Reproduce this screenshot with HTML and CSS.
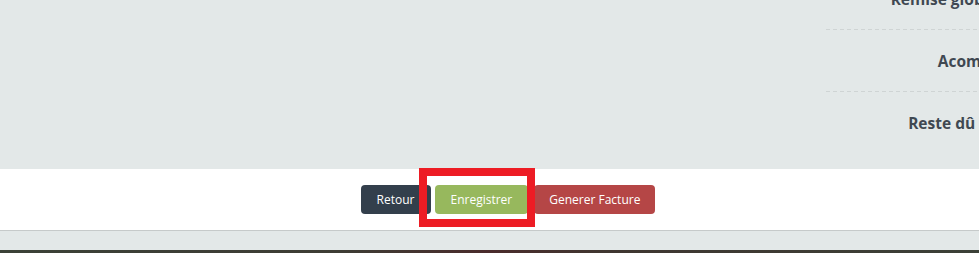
FILE: index.html
```html
<!DOCTYPE html>
<html lang="fr">
<head>
<meta charset="utf-8">
<title>Facture</title>
<link rel="stylesheet" href="styles.css">
</head>
<body>
  <section class="panel">
    <div class="summary">
      <div class="row"><span class="label">Remise globale</span></div>
      <div class="row"><span class="label">Acompte</span></div>
      <div class="row last"><span class="label">Reste dû TTC</span></div>
    </div>
  </section>
  <div class="actions">
    <button class="btn btn-dark" type="button">Retour</button>
    <span class="highlight"><button class="btn btn-green" type="button">Enregistrer</button></span>
    <button class="btn btn-red" type="button">Generer Facture</button>
  </div>
  <div class="strip"></div>
  <div class="dark-strip"></div>
</body>
</html>
```

FILE: styles.css
```css
html, body {
  margin: 0;
  padding: 0;
  overflow: hidden;
  background: #ffffff;
  font-family: "Open Sans", "Liberation Sans", sans-serif;
}

.panel {
  height: 169px;
  background: #e3e8e8;
  overflow: hidden;
}

.summary {
  margin-left: 826px;
  width: 181px;
  margin-top: -32px;
}

.row {
  height: 62px;
  display: flex;
  align-items: center;
  justify-content: flex-end;
  white-space: nowrap;
  background-image: repeating-linear-gradient(to right, #cfd4d4 0 4px, transparent 4px 7px);
  background-size: 100% 1px;
  background-position: left bottom;
  background-repeat: no-repeat;
}

.row.last {
  background-image: none;
}

.label {
  font-weight: 700;
  font-size: 15.5px;
  color: #3f4852;
}

.actions {
  height: 62px;
  box-sizing: border-box;
  padding: 16px 0 16px 37px;
  display: flex;
  justify-content: center;
  align-items: flex-start;
  gap: 4px;
  background: #ffffff;
  border-bottom: 1px solid #c6caca;
}

.btn {
  font-family: "Open Sans", "Liberation Sans", sans-serif;
  font-size: 12px;
  line-height: 17px;
  padding: 6px 16px;
  border: 0;
  border-radius: 4px;
  color: #ffffff;
  margin: 0;
  cursor: pointer;
}

.btn-dark { background: #333f4c; }
.btn-green { background: #97b85d; }
.btn-red { background: #b54646; padding: 6px 15px; }

.highlight {
  position: relative;
  display: inline-flex;
  margin-right: 2px;
}

.highlight::after {
  content: "";
  position: absolute;
  left: -16px;
  right: -7px;
  top: -17px;
  bottom: -13px;
  border: 8px solid #ed1c24;
  pointer-events: none;
}

.strip {
  height: 19px;
  background: #e3e8e8;
}

.dark-strip {
  height: 10px;
  background: linear-gradient(to right, #3b4137 0%, #3d3c34 35%, #4a2b2b 50%, #3f3630 62%, #3b4037 100%);
}
```
